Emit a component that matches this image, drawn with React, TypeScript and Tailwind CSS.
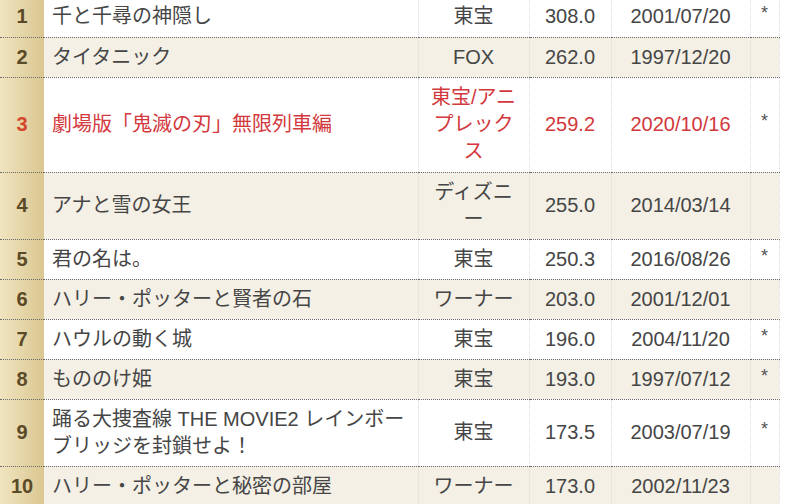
import React from "react";

type Row = {
  rank: number;
  title: React.ReactNode;
  dist: string;
  gross: string;
  date: string;
  mark: string;
  red?: boolean;
  h: string;
};

const rows: Row[] = [
  { rank: 1, title: "千と千尋の神隠し", dist: "東宝", gross: "308.0", date: "2001/07/20", mark: "*", h: "h-[40px]" },
  { rank: 2, title: "タイタニック", dist: "FOX", gross: "262.0", date: "1997/12/20", mark: "", h: "h-[39px]" },
  { rank: 3, title: "劇場版「鬼滅の刃」無限列車編", dist: "東宝/アニプレックス", gross: "259.2", date: "2020/10/16", mark: "*", red: true, h: "h-[95px]" },
  { rank: 4, title: "アナと雪の女王", dist: "ディズニー", gross: "255.0", date: "2014/03/14", mark: "", h: "h-[67px]" },
  { rank: 5, title: "君の名は。", dist: "東宝", gross: "250.3", date: "2016/08/26", mark: "*", h: "h-[39px]" },
  { rank: 6, title: "ハリー・ポッターと賢者の石", dist: "ワーナー", gross: "203.0", date: "2001/12/01", mark: "", h: "h-[40px]" },
  { rank: 7, title: "ハウルの動く城", dist: "東宝", gross: "196.0", date: "2004/11/20", mark: "*", h: "h-[40px]" },
  { rank: 8, title: "もののけ姫", dist: "東宝", gross: "193.0", date: "1997/07/12", mark: "*", h: "h-[40px]" },
  { rank: 9, title: "踊る大捜査線 THE MOVIE2 レインボーブリッジを封鎖せよ！", dist: "東宝", gross: "173.5", date: "2003/07/19", mark: "*", h: "h-[67px]" },
  { rank: 10, title: "ハリー・ポッターと秘密の部屋", dist: "ワーナー", gross: "173.0", date: "2002/11/23", mark: "", h: "h-[40px]" },
];

export default function App() {
  return (
    <div
      className="w-[793px] h-[504px] overflow-hidden bg-white"
      style={{ fontFamily: '"Liberation Sans", "Noto Sans CJK JP", sans-serif' }}
    >
      <table className="-mt-[3px] w-[779px] table-fixed border-collapse text-[20px] leading-[27px] text-[#464646]">
        <colgroup>
          <col className="w-[44px]" />
          <col className="w-[374px]" />
          <col className="w-[111px]" />
          <col className="w-[82px]" />
          <col className="w-[139px]" />
          <col className="w-[29px]" />
        </colgroup>
        <tbody>
          {rows.map((r, i) => {
            const bg = i % 2 === 1 ? "bg-[#f4f0e5]" : "bg-white";
            const tc = r.red ? "text-[#d2383c]" : "text-[#464646]";
            const cell = "border-b border-dotted border-b-[#6a6a6a] py-[6px] align-middle";
            return (
              <tr key={r.rank} className={`${bg} ${r.h}`}>
                <td
                  className={`${cell} bg-gradient-to-r from-[#f0e5c0] to-[#dac690] text-center font-bold ${
                    r.red ? "text-[#d4472c]" : "text-[#5a4a28]"
                  }`}
                >
                  {r.rank}
                </td>
                <td className={`${cell} pl-[8px] pr-[8px] ${tc}`}>{r.title}</td>
                <td className={`${cell} border-l border-l-[#dcdcdc] px-[8px] text-center ${tc}`}>{r.dist}</td>
                <td className={`${cell} border-l border-l-[#dcdcdc] text-center ${tc}`}>{r.gross}</td>
                <td className={`${cell} border-l border-l-[#dcdcdc] text-center ${tc}`}>{r.date}</td>
                <td className={`${cell} border-l border-r border-l-[#dcdcdc] border-r-[#dcdcdc] text-center text-[18px] text-[#555]`}>
                  <span className="relative -top-[3px]">{r.mark}</span>
                </td>
              </tr>
            );
          })}
        </tbody>
      </table>
    </div>
  );
}
